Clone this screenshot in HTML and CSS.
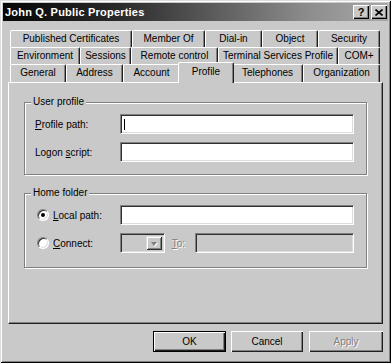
FILE: index.html
```html
<!DOCTYPE html>
<html>
<head>
<meta charset="utf-8">
<link rel="stylesheet" href="styles.css">
</head>
<body>
<div class="window">
  <div class="titlebar">
    <span class="title">John Q. Public Properties</span>
    <div class="tb-btns">
      <span class="tb-btn help">?</span>
      <span class="tb-btn close"><svg width="8" height="7" viewBox="0 0 8 7"><path d="M0.5 0.5 L7.5 6.5 M7.5 0.5 L0.5 6.5" stroke="#000" stroke-width="1.6" fill="none"/></svg></span>
    </div>
  </div>
  <div class="content">
    <div class="tabs">
      <div class="tabrow r1">
        <div class="tab">Published Certificates</div>
        <div class="tab">Member Of</div>
        <div class="tab">Dial-in</div>
        <div class="tab">Object</div>
        <div class="tab">Security</div>
      </div>
      <div class="tabrow r2">
        <div class="tab">Environment</div>
        <div class="tab">Sessions</div>
        <div class="tab">Remote control</div>
        <div class="tab">Terminal Services Profile</div>
        <div class="tab">COM+</div>
      </div>
      <div class="tabrow r3">
        <div class="tab">General</div>
        <div class="tab">Address</div>
        <div class="tab">Account</div>
        <div class="tab selected">Profile</div>
        <div class="tab">Telephones</div>
        <div class="tab">Organization</div>
      </div>
    </div>
    <div class="panel">
      <div class="group g1">
        <div class="legend">User profile</div>
        <div class="fields">
          <div class="row">
            <span class="label"><span><u>P</u>rofile path:</span></span>
            <div class="input"><span class="caret"></span></div>
          </div>
          <div class="row">
            <span class="label"><span>Logon <u>s</u>cript:</span></span>
            <div class="input"></div>
          </div>
        </div>
      </div>
      <div class="group g2">
        <div class="legend">Home folder</div>
        <div class="fields">
          <div class="row">
            <span class="label"><span class="radio checked"></span><span><u>L</u>ocal path:</span></span>
            <div class="input"></div>
          </div>
          <div class="row">
            <span class="label"><span class="radio"></span><span><u>C</u>onnect:</span></span>
            <div class="combo"><span class="combo-btn"><span class="arrow"></span></span></div>
            <span class="to disabled"><u>T</u>o:</span>
            <div class="input to-field"></div>
          </div>
        </div>
      </div>
    </div>
    <div class="buttons">
      <button class="btn default">OK</button>
      <button class="btn cancel">Cancel</button>
      <button class="btn apply disabled">Apply</button>
    </div>
  </div>
</div>
</body>
</html>
```

FILE: styles.css
```css
html, body {
  margin: 0;
  padding: 0;
  background: #c9c9c9;
}

body {
  font-family: "Liberation Sans", Arial, sans-serif;
  font-size: 10px;
  color: #000;
}

.window {
  width: 391px;
  height: 363px;
  box-sizing: border-box;
  padding: 3px;
  background: #c9c9c9;
  box-shadow: inset 1px 1px 0 #dcdcdc, inset -1px -1px 0 #000, inset 2px 2px 0 #fff, inset -2px -2px 0 #808080;
  display: flex;
  flex-direction: column;
}

.titlebar {
  height: 18px;
  background: linear-gradient(to right, #060606 0%, #2a2a2a 30%, #8e8e8e 80%, #a8a8a8 100%);
  display: flex;
  align-items: center;
  justify-content: space-between;
  padding: 0 1px 0 2px;
}

.title {
  color: #fff;
  font-weight: bold;
  font-size: 11px;
  letter-spacing: 0.2px;
}

.tb-btns {
  display: flex;
  gap: 2px;
}

.tb-btn {
  width: 16px;
  height: 14px;
  box-sizing: border-box;
  background: #c9c9c9;
  box-shadow: inset 1px 1px 0 #fff, inset -1px -1px 0 #000, inset -2px -2px 0 #808080;
  display: flex;
  align-items: center;
  justify-content: center;
  font-weight: bold;
  font-size: 11px;
  line-height: 1;
}

.content {
  padding: 9px 5px 0 5px;
  flex: 1;
  display: flex;
  flex-direction: column;
}

.tabs {
  margin: 0 3px 0 2px;
}

.tabrow {
  display: grid;
  height: 17px;
}

.r1 { grid-template-columns: 122px 73px 57px 56px 62px; }
.r2 { grid-template-columns: 70px 51px 87px 120px 42px; }
.r3 { grid-template-columns: 56px 57px 57px 52px 71px 77px; height: 18px; }

.tab {
  box-sizing: border-box;
  border-top: 1px solid #fff;
  border-left: 1px solid #fff;
  border-right: 1px solid #202020;
  box-shadow: inset -1px 0 0 #808080;
  border-radius: 2px 2px 0 0;
  background: #c9c9c9;
  text-align: center;
  line-height: 15px;
  white-space: nowrap;
  overflow: hidden;
}

.tab.selected {
  position: relative;
  z-index: 1;
  margin: -2px -2px -1px;
  line-height: 18px;
}

.panel {
  height: 242px;
  box-sizing: border-box;
  border-top: 1px solid #fff;
  border-left: 1px solid #fff;
  border-right: 1px solid #202020;
  border-bottom: 1px solid #202020;
  box-shadow: inset -1px -1px 0 #808080;
  padding: 19px 0 0 15px;
}

.group {
  width: 343px;
  box-sizing: border-box;
  border: 1px solid #808080;
  box-shadow: 1px 1px 0 #fff, inset 1px 1px 0 #fff;
}

.g1 { height: 73px; }
.g2 { height: 75px; margin-top: 18px; }

.legend {
  display: table;
  margin: -7px 0 0 6px;
  padding: 0 2px;
  height: 12px;
  line-height: 12px;
  background: #c9c9c9;
}

.fields {
  padding: 6px 12px 0 10px;
  display: flex;
  flex-direction: column;
  gap: 8px;
}

.row {
  display: flex;
  align-items: center;
  height: 20px;
}

.label {
  width: 85px;
  flex: none;
  display: flex;
  align-items: center;
  white-space: pre;
}

.input {
  width: 235px;
  height: 20px;
  box-sizing: border-box;
  background: #fff;
  border: 1px solid;
  border-color: #808080 #fff #fff #808080;
  box-shadow: inset 1px 1px 0 #303030, inset -1px -1px 0 #dcdcdc;
  display: flex;
  align-items: center;
  padding-left: 3px;
}

.caret {
  width: 1px;
  height: 11px;
  background: #000;
}

.radio {
  width: 12px;
  height: 12px;
  box-sizing: border-box;
  border-radius: 50%;
  background: #fff;
  border: 1px solid;
  border-color: #808080 #fff #fff #808080;
  box-shadow: inset 1px 1px 0 #303030, inset -1px -1px 0 #dcdcdc;
  margin: 0 4px 0 2px;
  display: flex;
  align-items: center;
  justify-content: center;
}

.radio.checked::after {
  content: "";
  width: 4px;
  height: 4px;
  border-radius: 50%;
  background: #000;
}

.combo {
  width: 45px;
  height: 20px;
  box-sizing: border-box;
  background: #c9c9c9;
  border: 1px solid;
  border-color: #808080 #fff #fff #808080;
  box-shadow: inset 1px 1px 0 #303030, inset -1px -1px 0 #dcdcdc;
  display: flex;
  justify-content: flex-end;
  padding: 2px;
}

.combo-btn {
  width: 16px;
  box-sizing: border-box;
  background: #c9c9c9;
  box-shadow: inset 1px 1px 0 #dcdcdc, inset -1px -1px 0 #303030, inset 2px 2px 0 #fff, inset -2px -2px 0 #808080;
  display: flex;
  align-items: center;
  justify-content: center;
}

.arrow {
  width: 0;
  height: 0;
  border-left: 3.5px solid transparent;
  border-right: 3.5px solid transparent;
  border-top: 4px solid #808080;
  margin-top: 1px;
  filter: drop-shadow(1px 1px 0 #fff);
}

.to {
  margin-left: 7px;
  width: 23px;
}

.disabled {
  color: #808080;
  text-shadow: 1px 1px 0 #fff;
}

.to-field {
  width: 160px;
  background: #c9c9c9;
}

.buttons {
  display: flex;
  justify-content: flex-end;
  padding-top: 7px;
  gap: 5px;
}

.btn {
  font-family: "Liberation Sans", Arial, sans-serif;
  font-size: 10px;
  height: 21px;
  width: 72px;
  box-sizing: border-box;
  background: #c9c9c9;
  border: none;
  padding: 0;
  box-shadow: inset 1px 1px 0 #fff, inset -1px -1px 0 #202020, inset -2px -2px 0 #808080;
  color: #000;
}

.btn.default {
  width: 73px;
  border: 1px solid #000;
}

.btn.apply {
  width: 74px;
  margin-left: 1px;
  color: #808080;
}
```
